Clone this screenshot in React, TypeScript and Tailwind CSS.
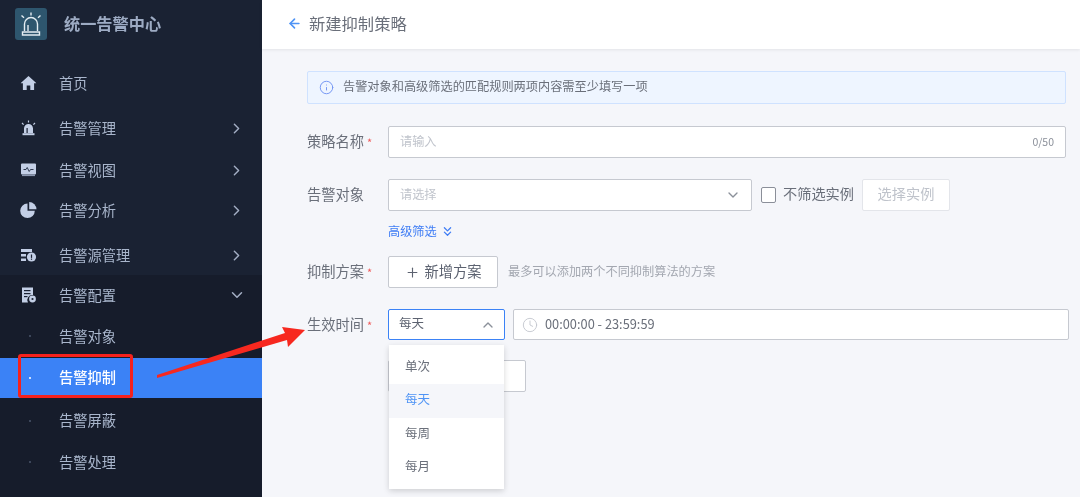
import { ChevronDown, ChevronRight, ChevronUp, ChevronsDown, Clock, Info, Plus, ArrowLeft } from "lucide-react";
import type { ReactNode } from "react";

const font = { fontFamily: '"Noto Sans CJK SC", "Noto Sans", sans-serif' };

function HomeIcon() {
  return (
    <svg width="16" height="16" viewBox="0 0 16 16" fill="#c3cfe6">
      <path d="M8 1 L16 8.2 L13.6 8.2 L13.6 15 L9.8 15 L9.8 10.5 L6.2 10.5 L6.2 15 L2.4 15 L2.4 8.2 L0 8.2 Z" />
    </svg>
  );
}
function AlarmIcon() {
  return (
    <svg width="16" height="16" viewBox="0 0 16 16" fill="#c3cfe6">
      <path d="M3.5 13 V8.5 a4.5 4.5 0 0 1 9 0 V13 Z" />
      <rect x="2" y="13.2" width="12" height="2" />
      <path d="M8 0.5 v2 M1.5 3 l1.6 1.6 M14.5 3 l-1.6 1.6" stroke="#c3cfe6" strokeWidth="1.2" />
      <rect x="6" y="8" width="1.2" height="5" fill="#1a2233" />
    </svg>
  );
}
function ViewIcon() {
  return (
    <svg width="16" height="14" viewBox="0 0 16 14">
      <rect x="0.5" y="0.5" width="15" height="11" rx="1" fill="#c3cfe6" />
      <rect x="1.5" y="11.5" width="13" height="1.6" fill="#8b97b0" />
      <path d="M3 6.5 h2.5 l1.2-2 l2 4 l1.3-2 H13" fill="none" stroke="#1f2a3f" strokeWidth="0.9" />
    </svg>
  );
}
function PieIcon() {
  return (
    <svg width="18" height="18" viewBox="0 0 18 18" fill="#c3cfe6">
      <path d="M8 2.5 V9.8 H15.3 A7.3 7.3 0 1 1 8 2.5 Z" />
      <path d="M9.7 1 A7.4 7.4 0 0 1 17 8.3 H9.7 Z" />
    </svg>
  );
}
function SourceIcon() {
  return (
    <svg width="16" height="14" viewBox="0 0 16 14" fill="#c3cfe6">
      <rect x="0.5" y="1" width="11" height="3" />
      <rect x="0.5" y="6" width="5" height="2.5" />
      <rect x="0.5" y="10.5" width="5" height="2.5" />
      <circle cx="11" cy="9" r="4.6" />
      <rect x="10.4" y="6.5" width="1.2" height="3.4" fill="#1a2233" />
      <rect x="10.4" y="10.6" width="1.2" height="1.2" fill="#1a2233" />
    </svg>
  );
}
function ConfigIcon() {
  return (
    <svg width="15" height="16" viewBox="0 0 15 16" fill="#c3cfe6">
      <path d="M0.5 0.5 H11.5 V8 A5 5 0 0 0 6.5 15.5 H0.5 Z" />
      <rect x="2.5" y="3" width="6.5" height="1.2" fill="#1a2233" />
      <rect x="2.5" y="6" width="6.5" height="1.2" fill="#1a2233" />
      <rect x="2.5" y="9" width="3.5" height="1.2" fill="#1a2233" />
      <circle cx="11" cy="12" r="3.4" />
      <circle cx="11" cy="12" r="1.1" fill="#1a2233" />
    </svg>
  );
}
function Logo() {
  return (
    <div className="flex h-8 w-8 items-center justify-center rounded-[3px] bg-[#2e566e]">
      <svg width="24" height="26" viewBox="0 0 24 26" fill="none" stroke="#e4edf2" strokeWidth="1.4">
        <path d="M5.5 20 V13 a6.5 6.5 0 0 1 13 0 V20" />
        <path d="M3.5 21 H20.5 V24 H3.5 Z" />
        <path d="M9 20 V14" />
        <path d="M12 1.5 V4.5 M2.5 4.5 L5 6.8 M21.5 4.5 L19 6.8" />
      </svg>
    </div>
  );
}

function MenuItem({
  icon,
  label,
  arrow,
  className = "",
}: {
  icon: ReactNode;
  label: string;
  arrow?: "right" | "down";
  className?: string;
}) {
  return (
    <div className={`flex h-10 items-center pr-[17px] text-[14.25px] text-[#a9b6cc] ${className}`}>
      <div className="flex w-[59px] shrink-0 items-center justify-center pr-[1px]">
        <div className="flex w-[20px] -translate-x-[0.5px] justify-center">{icon}</div>
      </div>
      <span className="flex-1">{label}</span>
      {arrow === "right" && <ChevronRight size={17} strokeWidth={2} className="text-[#a3aec4]" />}
      {arrow === "down" && <ChevronDown size={18} strokeWidth={2} className="-mr-[1px] text-[#a3aec4]" />}
    </div>
  );
}

function SubItem({ label, active, className = "", textClass = "" }: { label: string; active?: boolean; className?: string; textClass?: string }) {
  return (
    <div
      className={`flex h-10 items-center text-[14.25px] ${
        active ? "bg-[#3b82f6] font-medium text-white" : "text-[#a9b6cc]"
      } ${className}`}
    >
      <div className="flex w-[59px] justify-center">
        <span className={`h-[2px] w-[2px] rounded-full ${active ? "bg-white" : "bg-[#4a556b]"}`} />
      </div>
      <span className={textClass}>{label}</span>
    </div>
  );
}

function Field({ label, required, children, className = "" }: { label: string; required?: boolean; children: ReactNode; className?: string }) {
  return (
    <div className={`flex items-center ${className}`}>
      <div className="w-[81px] shrink-0 -translate-y-[1px] text-[14.25px] text-[#6a6f7a]">
        {label}
        {required && <span className="ml-[3px] text-[11px] text-[#ef5b5b]">*</span>}
      </div>
      {children}
    </div>
  );
}

export default function App() {
  return (
    <div className="relative flex h-[497px] w-[1080px] overflow-hidden bg-[#f5f6fa] blur-[0.35px]" style={font}>
      <aside className="flex w-[262px] shrink-0 flex-col bg-[#1a2233]">
        <div className="flex h-[48px] items-center pl-[15px]">
          <Logo />
          <span className="ml-[17px] -translate-y-[1px] text-[16.2px] font-bold text-[#9dabc3]">统一告警中心</span>
        </div>
        <div className="mt-[15px] flex flex-col">
          <MenuItem icon={<HomeIcon />} label="首页" />
          <MenuItem className="mt-[5px]" icon={<AlarmIcon />} label="告警管理" arrow="right" />
          <MenuItem className="mt-[2px]" icon={<ViewIcon />} label="告警视图" arrow="right" />
          <MenuItem icon={<PieIcon />} label="告警分析" arrow="right" />
          <MenuItem className="mt-[5px]" icon={<SourceIcon />} label="告警源管理" arrow="right" />
          <div className="flex flex-col bg-[#161c2b] pb-[15px]">
            <MenuItem icon={<ConfigIcon />} label="告警配置" arrow="down" />
            <SubItem className="mt-[1px]" label="告警对象" />
            <SubItem className="mt-[2px]" textClass="-translate-y-[1px]" label="告警抑制" active />
            <SubItem className="mt-[3px]" textClass="-translate-y-[1px]" label="告警屏蔽" />
            <SubItem className="mt-[1px]" label="告警处理" />
          </div>
        </div>
      </aside>

      <main className="flex min-w-0 flex-1 flex-col">
        <header className="flex h-[49px] shrink-0 items-center bg-white pl-[25px] shadow-[0_1px_3px_rgba(0,0,0,0.08)]">
          <ArrowLeft size={15} strokeWidth={2.6} className="-translate-y-[1px] text-[#4f94f5]" />
          <span className="ml-[7px] -translate-y-[1px] text-[16.3px] text-[#6a6f7a]">新建抑制策略</span>
        </header>

        <div className="flex flex-col pl-[45px] pt-[22px]">
          <div className="flex h-[33px] w-[759px] items-center rounded-[2px] border border-[#cfe2ff] bg-[#eef5ff] pl-[11px] text-[12.2px] text-[#6a6f7a]">
            <Info size={15} strokeWidth={1.5} className="text-[#6f92f2]" />
            <span className="ml-[9px] -translate-y-[1px]">告警对象和高级筛选的匹配规则两项内容需至少填写一项</span>
          </div>

          <Field label="策略名称" required className="mt-[22px]">
            <div className="flex h-[32px] w-[678px] items-center justify-between rounded-[2px] border border-[#c6c9d0] bg-white px-[11px] text-[12.2px]">
              <span className="-translate-y-[1px] text-[#c0c4cc]">请输入</span>
              <span className="text-[10.5px] text-[#8b909a]">0/50</span>
            </div>
          </Field>

          <Field label="告警对象" className="mt-[21px]">
            <div className="flex h-[32px] w-[364px] items-center justify-between rounded-[2px] border border-[#c6c9d0] bg-white pl-[11px] pr-[10px] text-[12.2px]">
              <span className="-translate-y-[1px] text-[#c0c4cc]">请选择</span>
              <ChevronDown size={16} strokeWidth={2} className="text-[#8b909a]" />
            </div>
            <span className="ml-[9px] h-[16px] w-[15px] rounded-[2px] border border-[#8b8f99] bg-white" />
            <span className="ml-[7px] w-[72px] -translate-y-[1px] text-[14.2px] text-[#6a6f7a]">不筛选实例</span>
            <div className="ml-[7px] flex h-[32px] w-[88px] items-center justify-center rounded-[2px] border border-[#e3e5ea] bg-white text-[14.2px] text-[#bfc3cb]">
              <span className="-translate-y-[1px]">选择实例</span>
            </div>
          </Field>

          <div className="ml-[81px] mt-[12px] flex h-[17px] items-center text-[12.2px] text-[#3f7df5]">
            <span>高级筛选</span>
            <ChevronsDown size={15} strokeWidth={2} className="ml-[3px]" />
          </div>

          <Field label="抑制方案" required className="mt-[16px]">
            <div className="flex h-[32px] w-[110px] items-center justify-center rounded-[2px] border border-[#c6c9d0] bg-white pl-[1px] text-[14.25px] text-[#5c6270]">
              <Plus size={15} strokeWidth={1.8} className="mr-[4px]" />
              <span className="-translate-y-[1px]">新增方案</span>
            </div>
            <span className="ml-[10px] -translate-y-[1px] text-[12.2px] text-[#a3a7b0]">最多可以添加两个不同抑制算法的方案</span>
          </Field>

          <Field label="生效时间" required className="mt-[21px]">
            <div className="relative">
              <div className="flex h-[31px] w-[117px] items-center justify-between rounded-[2px] border border-[#3b82f6] bg-white pl-[10px] pr-[8px] text-[12.5px] text-[#5c6270]">
                <span className="-translate-y-[1px]">每天</span>
                <ChevronUp size={16} strokeWidth={2} className="text-[#8b909a]" />
              </div>
              <div className="absolute left-[1px] top-[36px] z-10 flex h-[144px] w-[115px] flex-col bg-white py-[5px] text-[12.5px] text-[#6a6f7a] shadow-[0_2px_6px_rgba(0,0,0,0.16)]">
                <div className="flex h-[34px] items-center pb-[2px] pl-[16px]">单次</div>
                <div className="flex h-[34px] items-center bg-[#f5f6fa] pb-[4px] pl-[16px] text-[#4f94f5]">每天</div>
                <div className="flex h-[33px] items-center pb-[3px] pl-[16px]">每周</div>
                <div className="flex h-[33px] items-center pb-[2px] pl-[16px]">每月</div>
              </div>
            </div>
            <div className="ml-[8px] flex h-[31px] w-[556px] items-center rounded-[2px] border border-[#c6c9d0] bg-white pl-[8px] text-[12.5px] text-[#6a6f7a]">
              <Clock size={16} strokeWidth={1.3} className="text-[#c0c4cc]" />
              <span className="ml-[7px] -translate-y-[1px] text-[12.8px]">00:00:00 - 23:59:59</span>
            </div>
          </Field>

          <div className="ml-[81px] mt-[20px] h-[32px] w-[138px] rounded-[2px] border border-[#c6c9d0] bg-white" />
        </div>
      </main>

      <div className="absolute left-[18px] top-[354px] z-20 h-[44px] w-[115px] rounded-[3px] border-[3px] border-[#f5211c]" />
      <svg className="absolute left-0 top-0 z-20" width="1080" height="497" fill="#f7281f">
        <polygon points="157,378 157,375 285,333 282,327 305,330 288,347 287,340" />
      </svg>
    </div>
  );
}
